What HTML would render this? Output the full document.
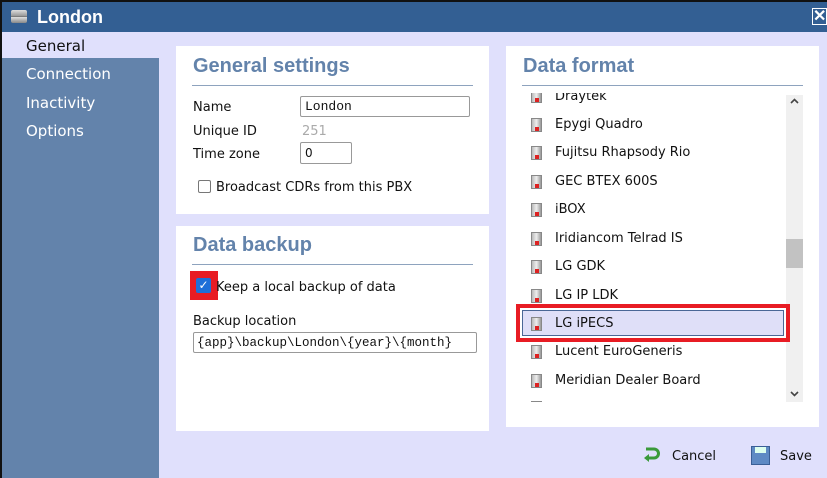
<!DOCTYPE html><html><head><style>
*{margin:0;padding:0;box-sizing:border-box}
body{width:827px;height:478px;overflow:hidden;background:#e0e0fc;font-family:"DejaVu Sans","Liberation Sans",sans-serif;font-size:13px;color:#111;position:relative}
.a{position:absolute}
.t{font-size:13px;white-space:nowrap}
.h{font-family:"Liberation Sans",sans-serif;font-weight:bold;font-size:20px;color:#6383ab}
.p{background:#fff}
.ic{width:11px;height:14px;background:linear-gradient(90deg,#bbb,#eee,#999);border:1px solid #888}
.ic:after{content:"";position:absolute;left:3px;bottom:0;width:4px;height:4px;background:#d22}
</style></head><body>
<div class="a" style="left:0;top:0;width:827px;height:2px;background:#111"></div>
<div class="a" style="left:0;top:0;width:2px;height:478px;background:#111"></div>
<div class="a" style="left:2px;top:2px;width:825px;height:30px;background:#335f93"></div>
<div class="a" style="left:11px;top:10px;width:16px;height:13px;background:linear-gradient(#ddd 0,#999 45%,#555 50%,#ddd 55%,#888 100%);border-radius:2px"></div>
<div class="a" style="left:37px;top:7px;font-family:'Liberation Sans',sans-serif;font-weight:bold;font-size:18px;color:#fff">London</div>
<div class="a" style="left:812px;top:8px;width:15px;height:17px;border:1px solid #fff;color:#fff;font:bold 16px/15px 'Liberation Sans',sans-serif;text-align:center">✕</div>
<div class="a" style="left:2px;top:58px;width:157px;height:420px;background:#6383ab"></div>
<div class="a t" style="left:26px;top:37px;font-size:15px">General</div>
<div class="a t" style="left:26px;top:65px;font-size:15px;color:#fff">Connection</div>
<div class="a t" style="left:26px;top:94px;font-size:15px;color:#fff">Inactivity</div>
<div class="a t" style="left:26px;top:122px;font-size:15px;color:#fff">Options</div>

<div class="a p" style="left:176px;top:46px;width:313px;height:168px"></div>
<div class="a h" style="left:193px;top:55px">General settings</div>
<div class="a" style="left:192px;top:85px;width:281px;height:1px;background:#8ea3be"></div>
<div class="a t" style="left:193px;top:100px">Name</div>
<div class="a" style="left:300px;top:96px;width:170px;height:21px;border:1px solid #999;border-radius:2px;font-family:'Liberation Mono',monospace;font-size:13px;padding:2px 4px">London</div>
<div class="a t" style="left:193px;top:124px">Unique ID</div>
<div class="a t" style="left:302px;top:124px;color:#aaa">251</div>
<div class="a t" style="left:193px;top:147px">Time zone</div>
<div class="a" style="left:300px;top:142px;width:52px;height:22px;border:1px solid #999;border-radius:2px;font-size:12px;padding:3px 4px">0</div>
<div class="a" style="left:198px;top:180px;width:13px;height:13px;border:1px solid #777;border-radius:2px"></div>
<div class="a t" style="left:216px;top:180px">Broadcast CDRs from this PBX</div>

<div class="a p" style="left:176px;top:226px;width:313px;height:205px"></div>
<div class="a h" style="left:193px;top:234px">Data backup</div>
<div class="a" style="left:192px;top:264px;width:281px;height:1px;background:#8ea3be"></div>
<div class="a" style="left:190px;top:271px;width:28px;height:29px;background:#e81c24"></div>
<div class="a" style="left:196px;top:278px;width:15px;height:15px;background:#1e6fd8;border-radius:2px;color:#fff;font-size:12px;line-height:15px;text-align:center;font-weight:bold">✓</div>
<div class="a t" style="left:216px;top:280px">Keep a local backup of data</div>
<div class="a t" style="left:193px;top:314px">Backup location</div>
<div class="a" style="left:193px;top:332px;width:284px;height:21px;border:1px solid #999;border-radius:2px;font-family:'Liberation Mono',monospace;font-size:12.5px;padding:3px 3px;white-space:nowrap;overflow:hidden">{app}\backup\London\{year}\{month}</div>

<div class="a p" style="left:506px;top:46px;width:313px;height:381px"></div>
<div class="a h" style="left:523px;top:55px">Data format</div>
<div class="a" style="left:522px;top:85px;width:281px;height:1px;background:#8ea3be"></div>
<div class="a" style="left:786px;top:95px;width:17px;height:307px;background:#f0f0f0"></div>
<div class="a" style="left:786px;top:239px;width:17px;height:29px;background:#c2c2c2"></div>
<svg class="a" style="left:789px;top:97px" width="11" height="8"><path d="M2 6 L5.5 2.5 L9 6" stroke="#444" stroke-width="1.6" fill="none"/></svg>
<svg class="a" style="left:789px;top:390px" width="11" height="8"><path d="M2 2 L5.5 5.5 L9 2" stroke="#444" stroke-width="1.6" fill="none"/></svg>
<div class="a" style="left:516px;top:304px;width:274px;height:38px;background:#e81c24"></div>
<div class="a" style="left:520px;top:308px;width:266px;height:30px;background:#fff"></div>
<div class="a" style="left:522px;top:310px;width:262px;height:26px;background:#dfdff8;border:1px solid #4a6796"></div>
<div class="a" style="left:520px;top:93px;width:264px;height:309px;overflow:hidden">
<div class="a ic" style="left:11px;top:-4px"></div><div class="a t" style="left:35px;top:-4px">Draytek</div>
<div class="a ic" style="left:11px;top:25px"></div><div class="a t" style="left:35px;top:24px">Epygi Quadro</div>
<div class="a ic" style="left:11px;top:53px"></div><div class="a t" style="left:35px;top:52px">Fujitsu Rhapsody Rio</div>
<div class="a ic" style="left:11px;top:82px"></div><div class="a t" style="left:35px;top:81px">GEC BTEX 600S</div>
<div class="a ic" style="left:11px;top:110px"></div><div class="a t" style="left:35px;top:109px">iBOX</div>
<div class="a ic" style="left:11px;top:139px"></div><div class="a t" style="left:35px;top:138px">Iridiancom Telrad IS</div>
<div class="a ic" style="left:11px;top:167px"></div><div class="a t" style="left:35px;top:166px">LG GDK</div>
<div class="a ic" style="left:11px;top:196px"></div><div class="a t" style="left:35px;top:195px">LG IP LDK</div>
<div class="a ic" style="left:11px;top:224px"></div><div class="a t" style="left:35px;top:223px">LG iPECS</div>
<div class="a ic" style="left:11px;top:252px"></div><div class="a t" style="left:35px;top:251px">Lucent EuroGeneris</div>
<div class="a ic" style="left:11px;top:281px"></div><div class="a t" style="left:35px;top:280px">Meridian Dealer Board</div>
<div class="a ic" style="left:11px;top:308px"></div>
</div>
<svg class="a" style="left:643px;top:446px" width="18" height="16"><path d="M3 3 H11 A4.5 4.5 0 0 1 11 12 H4" stroke="#3a9a3a" stroke-width="3" fill="none"/><path d="M1 12 L6 8 L6 16 Z" fill="#3a9a3a"/></svg>
<div class="a t" style="left:672px;top:449px">Cancel</div>
<div class="a" style="left:751px;top:446px;width:19px;height:19px;background:#5e8ac4;border:1px solid #3a5f96"></div>
<div class="a" style="left:755px;top:447px;width:11px;height:6px;background:#dfe"></div>
<div class="a t" style="left:780px;top:449px">Save</div>
</body></html>
